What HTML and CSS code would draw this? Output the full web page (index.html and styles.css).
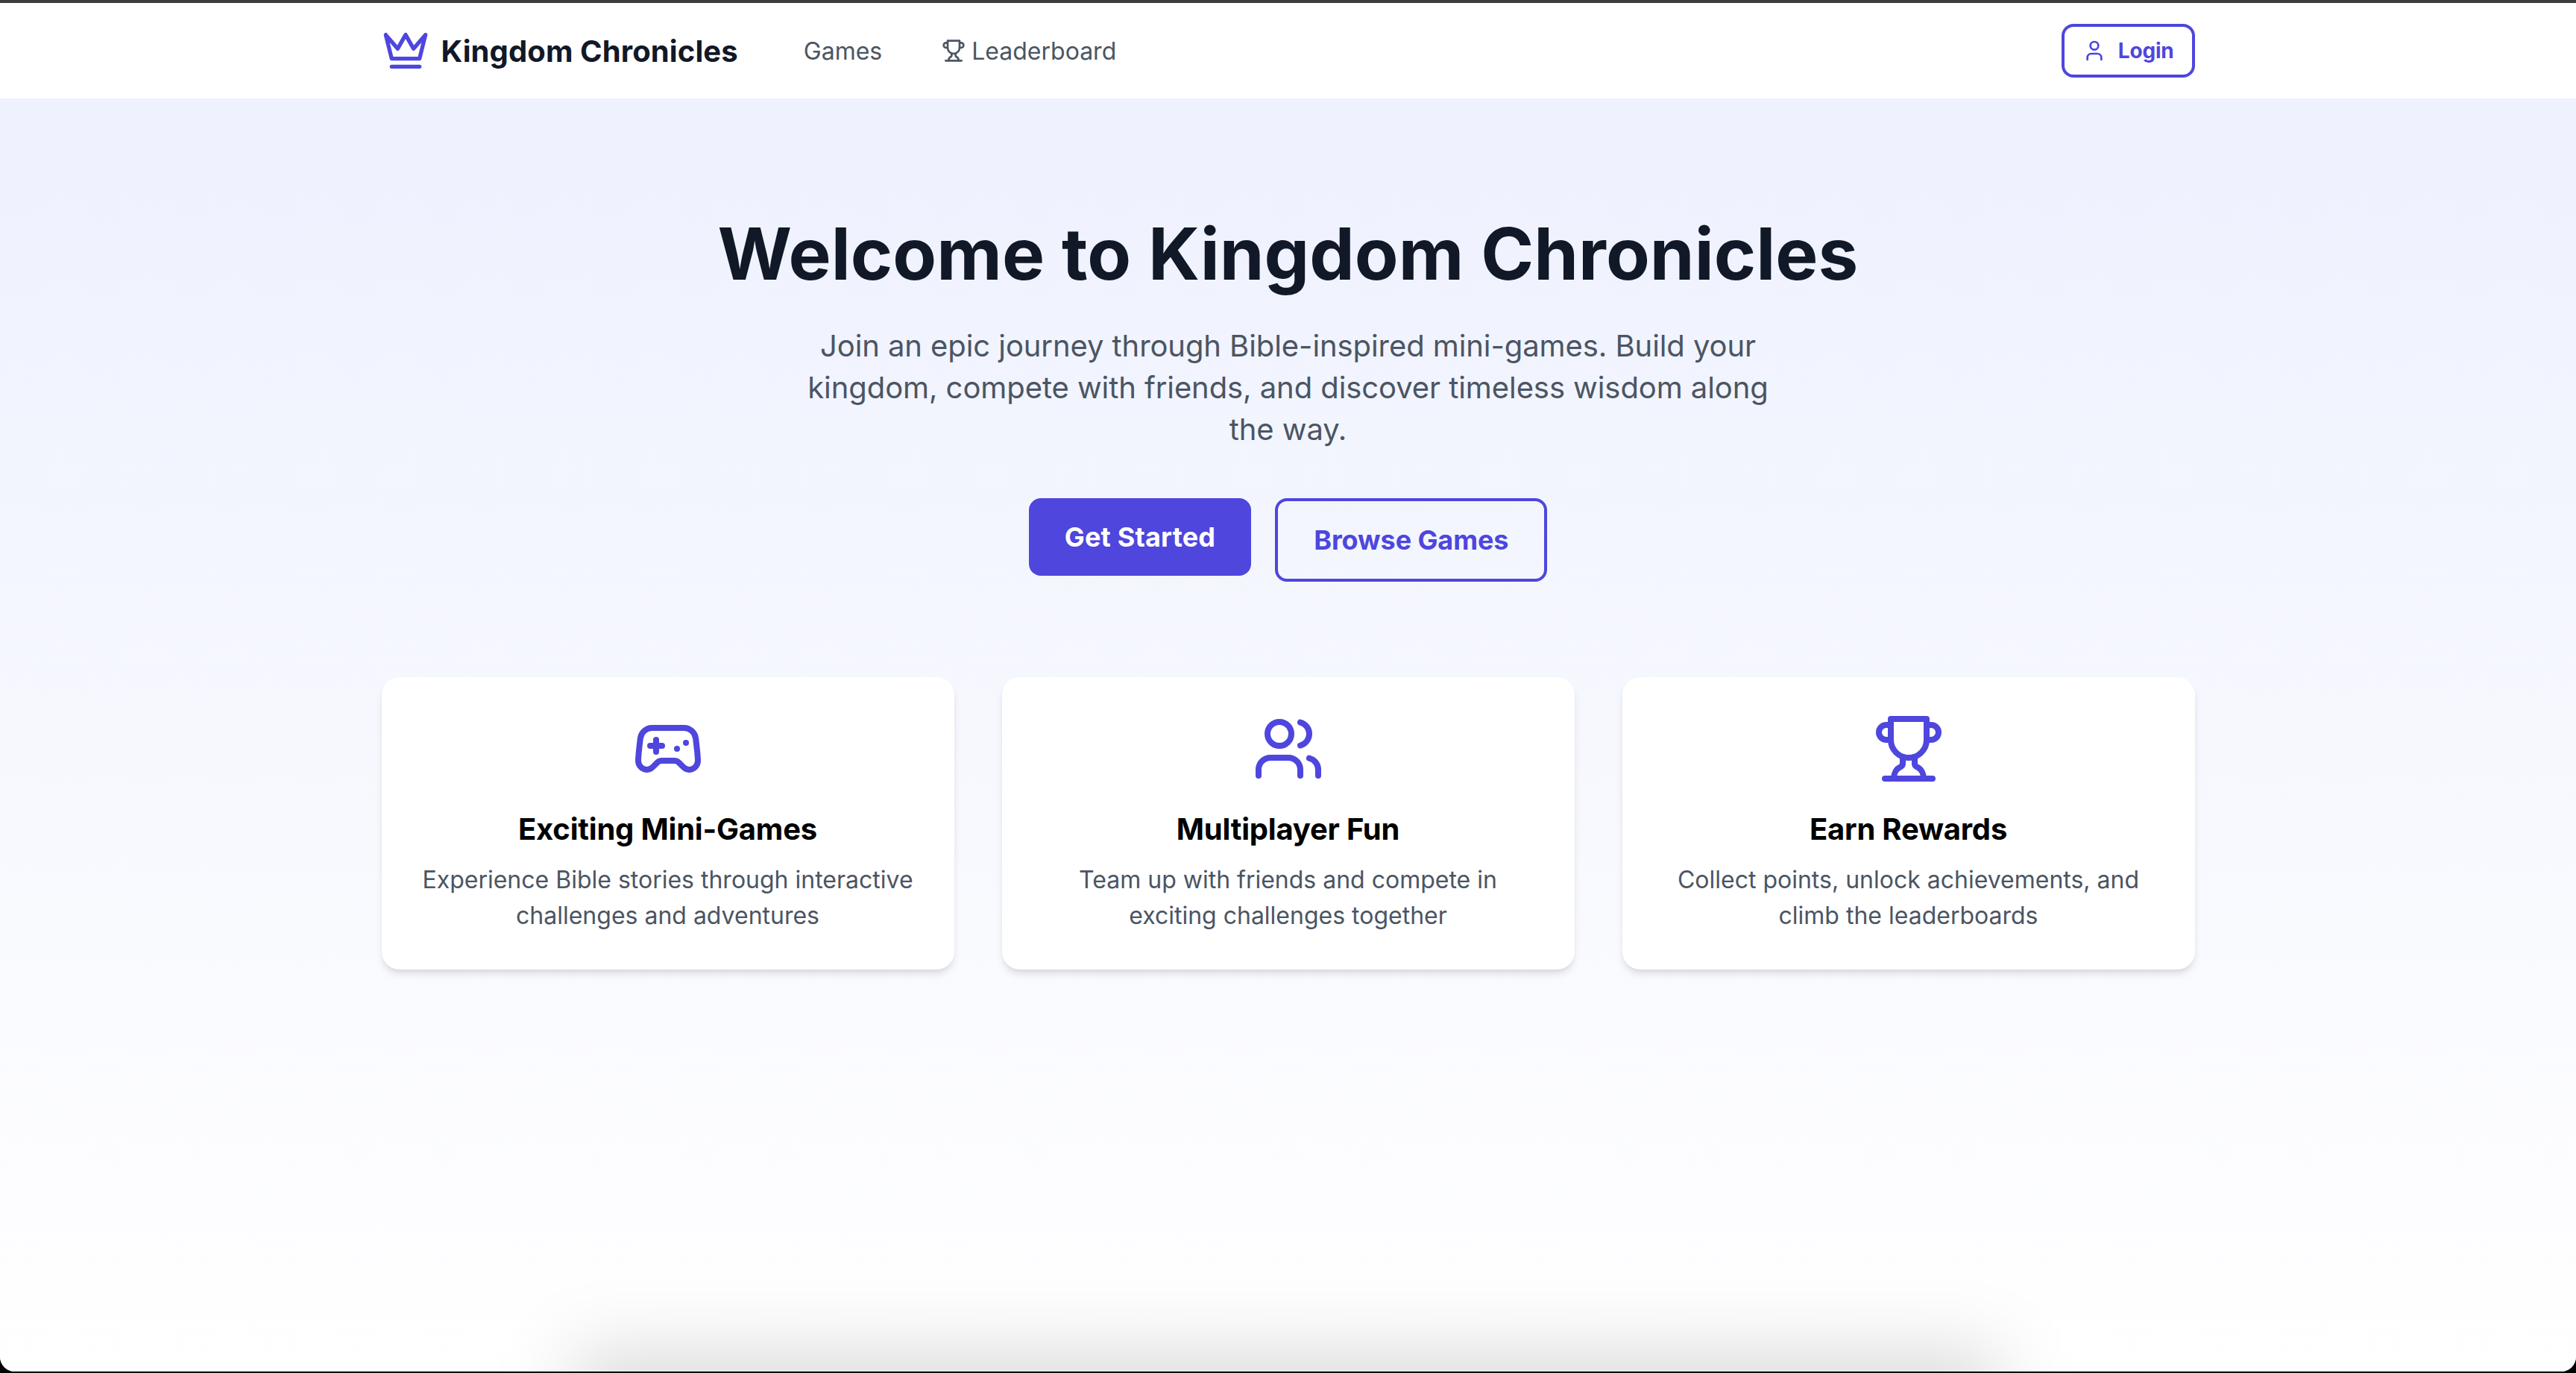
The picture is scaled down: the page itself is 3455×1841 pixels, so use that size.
FILE: index.html
```html
<!DOCTYPE html>
<html>

<head>
  <title>Kingdom Chronicles</title>
  <link rel="stylesheet" href="styles.css">
</head>

<body>
  <div class="window">
    <div class="window-top"></div>

    <nav class="navbar">
      <div class="container navbar-row">
        <div class="navbar-left">
          <a class="brand" href="#">
            <svg class="icon brand-icon" viewBox="0 0 24 24"><path d="m2 4 3 12h14l3-12-6 7-4-7-4 7-6-7zm3 16h14"/></svg>
            <span>Kingdom Chronicles</span>
          </a>
          <div class="nav-links">
            <a class="nav-link" href="#">Games</a>
            <a class="nav-link" href="#">
              <svg class="icon nav-icon" viewBox="0 0 24 24"><path d="M6 9H4.5a2.5 2.5 0 0 1 0-5H6"/><path d="M18 9h1.5a2.5 2.5 0 0 0 0-5H18"/><path d="M4 22h16"/><path d="M10 14.66V17c0 .55-.47.98-.97 1.21C7.85 18.75 7 20.24 7 22"/><path d="M14 14.66V17c0 .55.47.98.97 1.21C16.15 18.75 17 20.24 17 22"/><path d="M18 2H6v7a6 6 0 0 0 12 0V2Z"/></svg>
              Leaderboard
            </a>
          </div>
        </div>
        <button class="login" type="button">
          <svg class="icon nav-icon" viewBox="0 0 24 24"><path d="M19 21v-2a4 4 0 0 0-4-4H9a4 4 0 0 0-4 4v2"/><circle cx="12" cy="7" r="4"/></svg>
          Login
        </button>
      </div>
    </nav>

    <main class="main">
      <div class="container">
        <section class="hero">
          <h1>Welcome to Kingdom Chronicles</h1>
          <p class="lead">Join an epic journey through Bible-inspired mini-games. Build your kingdom, compete with friends, and discover timeless wisdom along the way.</p>
          <div class="hero-buttons">
            <button class="btn btn-primary" type="button">Get Started</button>
            <button class="btn btn-outline" type="button">Browse Games</button>
          </div>
        </section>

        <section class="features">
          <div class="card">
            <svg class="icon card-icon" viewBox="0 0 24 24"><line x1="6" x2="10" y1="11" y2="11"/><line x1="8" x2="8" y1="9" y2="13"/><line x1="15" x2="15.01" y1="12" y2="12"/><line x1="18" x2="18.01" y1="10" y2="10"/><path d="M17.32 5H6.68a4 4 0 0 0-3.978 3.59c-.006.052-.01.101-.017.152C2.604 9.416 2 14.456 2 16a3 3 0 0 0 3 3c1 0 1.5-.5 2-1l1.414-1.414A2 2 0 0 1 9.828 16h4.344a2 2 0 0 1 1.414.586L17 18c.5.5 1 1 2 1a3 3 0 0 0 3-3c0-1.545-.604-6.584-.685-7.258-.007-.05-.011-.1-.017-.151A4 4 0 0 0 17.32 5z"/></svg>
            <h3>Exciting Mini-Games</h3>
            <p>Experience Bible stories through interactive challenges and adventures</p>
          </div>
          <div class="card">
            <svg class="icon card-icon" viewBox="0 0 24 24"><path d="M16 21v-2a4 4 0 0 0-4-4H6a4 4 0 0 0-4 4v2"/><circle cx="9" cy="7" r="4"/><path d="M22 21v-2a4 4 0 0 0-3-3.87"/><path d="M16 3.13a4 4 0 0 1 0 7.75"/></svg>
            <h3>Multiplayer Fun</h3>
            <p>Team up with friends and compete in exciting challenges together</p>
          </div>
          <div class="card">
            <svg class="icon card-icon" viewBox="0 0 24 24"><path d="M6 9H4.5a2.5 2.5 0 0 1 0-5H6"/><path d="M18 9h1.5a2.5 2.5 0 0 0 0-5H18"/><path d="M4 22h16"/><path d="M10 14.66V17c0 .55-.47.98-.97 1.21C7.85 18.75 7 20.24 7 22"/><path d="M14 14.66V17c0 .55.47.98.97 1.21C16.15 18.75 17 20.24 17 22"/><path d="M18 2H6v7a6 6 0 0 0 12 0V2Z"/></svg>
            <h3>Earn Rewards</h3>
            <p>Collect points, unlock achievements, and climb the leaderboards</p>
          </div>
        </section>
      </div>
      <div class="bottom-shadow"></div>
    </main>
  </div>
</body>

</html>
```

FILE: styles.css
```css
html,
body {
  height: 100%;
}

body {
  margin: 0;
  background-color: #000;
  font-family: Inter, "Noto Sans", sans-serif;
  overflow: hidden;
}

.window {
  display: flex;
  flex-direction: column;
  height: 1839px;
  overflow: hidden;
  border-radius: 0 0 20px 20px;
  background-color: #fff;
}

.window-top {
  flex: none;
  height: 4px;
  background-color: #3c3c3c;
}

.container {
  width: 2432px;
  margin: 0 auto;
}

.icon {
  fill: none;
  stroke: currentColor;
  stroke-width: 2;
  stroke-linecap: round;
  stroke-linejoin: round;
}

.navbar {
  flex: none;
  height: 128px;
  background-color: #fff;
}

.navbar-row {
  display: flex;
  align-items: center;
  justify-content: space-between;
  height: 100%;
}

.navbar-left {
  display: flex;
  align-items: center;
  gap: 88px;
}

.brand {
  display: flex;
  align-items: center;
  gap: 16px;
  font-size: 40px;
  font-weight: 700;
  letter-spacing: 0.1px;
  color: #111827;
  text-decoration: none;
}

.brand-icon {
  width: 64px;
  height: 64px;
  color: #4e46dd;
}

.nav-links {
  display: flex;
  align-items: center;
  gap: 80px;
}

.nav-link {
  display: flex;
  align-items: center;
  gap: 8px;
  font-size: 32px;
  color: #4b5563;
  text-decoration: none;
}

.nav-icon {
  width: 32px;
  height: 32px;
}

.login {
  display: flex;
  align-items: center;
  gap: 16px;
  height: 72px;
  padding: 0 24px;
  border: 4px solid #4e46dd;
  border-radius: 16px;
  background: none;
  font-family: inherit;
  font-size: 28px;
  font-weight: 650;
  letter-spacing: -0.2px;
  color: #4e46dd;
}

.main {
  position: relative;
  flex: 1;
  background: linear-gradient(to bottom, #eef1fe, #fff);
}

.hero {
  display: flex;
  flex-direction: column;
  align-items: center;
  padding-top: 160px;
  text-align: center;
}

h1 {
  margin: 0 0 48px;
  font-size: 96px;
  line-height: 96px;
  font-weight: 700;
  letter-spacing: 0.05px;
  color: #111827;
}

.lead {
  width: 1344px;
  margin: 0 0 64px;
  font-size: 40px;
  line-height: 56px;
  letter-spacing: -0.08px;
  color: #4b5563;
}

.hero-buttons {
  display: flex;
  align-items: flex-start;
  gap: 32px;
}

.btn {
  padding: 24px 48px;
  border: none;
  border-radius: 16px;
  font-family: inherit;
  font-size: 36px;
  line-height: 56px;
  font-weight: 650;
}

.btn-primary {
  background-color: #4e46dd;
  letter-spacing: 0.2px;
  color: #fff;
}

.btn-outline {
  border: 4px solid #4e46dd;
  background: none;
  letter-spacing: -0.1px;
  color: #4e46dd;
}

.features {
  display: grid;
  grid-template-columns: repeat(3, 1fr);
  gap: 64px;
  margin-top: 128px;
}

.card {
  padding: 48px;
  border-radius: 24px;
  background-color: #fff;
  box-shadow: 0 8px 12px -2px rgba(0, 0, 0, 0.1), 0 4px 8px -4px rgba(0, 0, 0, 0.1);
  text-align: center;
}

.card-icon {
  display: block;
  width: 96px;
  height: 96px;
  margin: 0 auto 32px;
  color: #4e46dd;
}

.card h3 {
  margin: 0 0 16px;
  font-size: 40px;
  line-height: 56px;
  font-weight: 650;
  letter-spacing: -0.2px;
  color: #000;
}

.card p {
  margin: 0;
  font-size: 32px;
  line-height: 48px;
  color: #4b5563;
}

/* soft shadow coming up from below the window edge */
.bottom-shadow {
  position: absolute;
  left: 770px;
  bottom: -176px;
  width: 1910px;
  height: 200px;
  background-color: rgba(0, 0, 0, 0.15);
  filter: blur(50px);
}
```
